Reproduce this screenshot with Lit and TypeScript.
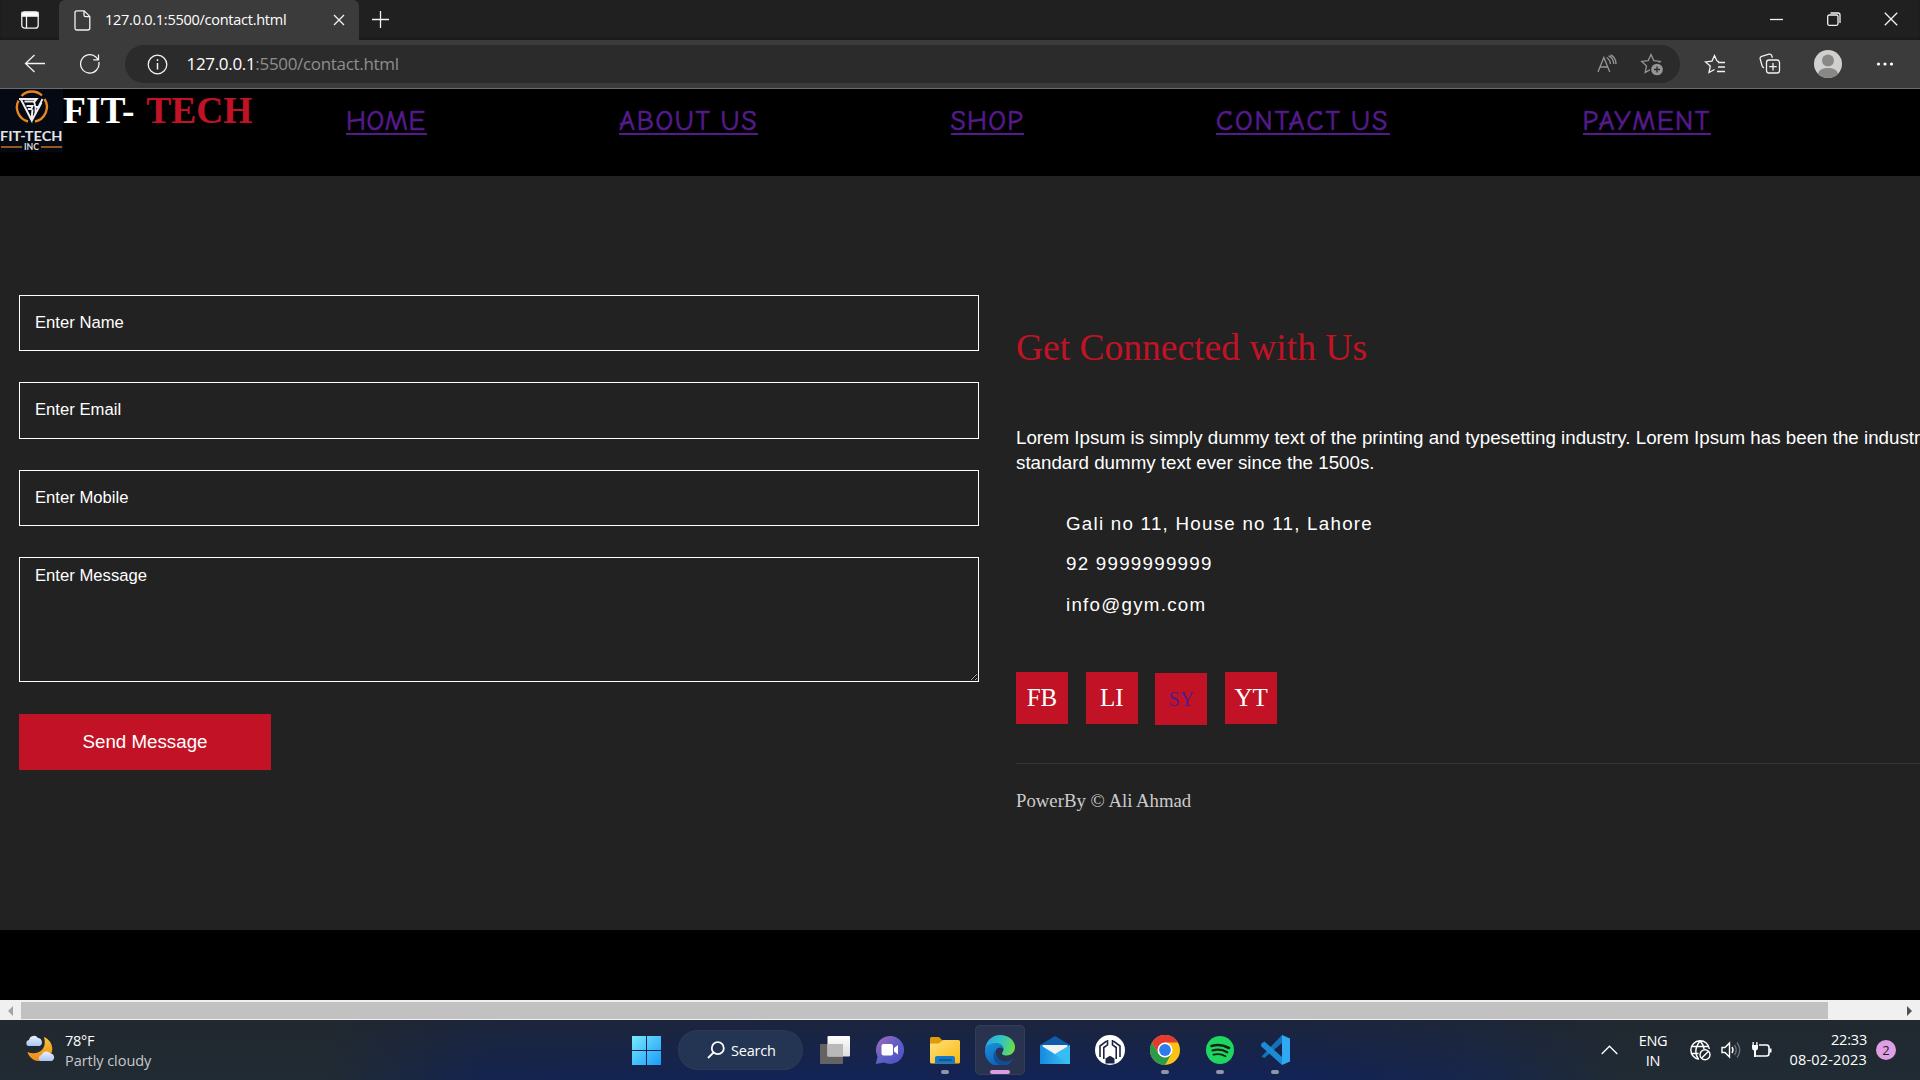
import { LitElement, html, css, svg } from "lit";
import { customElement } from "lit/decorators.js";

const star = "M12 2.6l2.8 6 6.5.8-4.8 4.5 1.3 6.5-5.8-3.2-5.8 3.2 1.3-6.5L2.700 9.4l6.500-.8z";

const navLinks = [
  { label: "HOME", cls: "w-home" },
  { label: "ABOUT US", cls: "w-about" },
  { label: "SHOP", cls: "w-shop" },
  { label: "CONTACT US", cls: "w-contact" },
  { label: "PAYMENT", cls: "w-pay" },
];

@customElement("browser-chrome")
class BrowserChrome extends LitElement {
  static styles = css`
    :host { display: block; font-family: "Segoe UI", "Open Sans", "Noto Sans", sans-serif; color: #fff; }
    svg { display: block; fill: none; stroke: #f2f2f2; stroke-width: 1.3; flex: none; }
    .tabs { height: 40px; background: #202020; display: flex; box-shadow: inset 0 -2px 2px #1a1a1a; }
    .workspace { width: 59px; padding: 11px 0 0 21px; box-sizing: border-box; }
    .tab { width: 300px; height: 40px; box-sizing: border-box; background: #3b3b3b; border-radius: 6px 6px 0 0; display: flex; align-items: center; padding: 0 14px 0 15px; }
    .title { font-size: 14.5px; letter-spacing: -0.26px; line-height: 20px; margin-left: 14px; flex: 1; white-space: nowrap; }
    .plus { margin: 10px 0 0 12px; }
    .winctl { margin-left: auto; display: flex; padding: 12px 22px 0 0; gap: 43.5px; }
    .bar { height: 48px; background: #3b3b3b; display: flex; align-items: center; box-sizing: border-box; padding-left: 24px; }
    .reload { margin-left: 34px; }
    .pill { margin-left: 25px; width: 1555px; height: 38px; border-radius: 19px; background: #2b2b2b; display: flex; align-items: center; box-sizing: border-box; padding: 0 17px 0 22px; }
    .url { font-size: 17px; letter-spacing: -0.32px; line-height: 24px; margin-left: 18.5px; flex: 1; white-space: nowrap; }
    .path { color: #8e8e8e; }
    .dim { stroke: #969696; }
    .fav { margin-left: 21px; }
    .s1 { margin-left: 23px; }
    .s2 { margin-left: 32px; }
    .s3 { margin-left: 33px; }
    .s4 { margin-left: 34px; }
    .line { height: 1px; background: #6b6b6b; }
  `;
  render() {
    return html`
      <div class="tabs">
        <div class="workspace">
          <svg width="18" height="18" viewBox="0 0 18 18"><rect x=".8" y=".8" width="16.400" height="16.400" rx="3"/><path d="M1 1.500h16v3.700H1z" fill="#fff"/><path d="M5.500 5v12"/></svg>
        </div>
        <div class="tab">
          <svg width="17" height="21" viewBox="0 0 17 21"><path d="M3 .8h7.200L15.800 6.400V18q0 2-2 2H3q-2 0-2-2V2.800q0-2 2-2zM10 1v4q0 1.600 1.600 1.600h4"/></svg>
          <span class="title">127.0.0.1:5500/contact.html</span>
          <svg width="12" height="12" viewBox="0 0 12 12"><path d="M1 1l10 10M11 1L1 11"/></svg>
        </div>
        <svg class="plus" width="19" height="19" viewBox="0 0 19 19"><path d="M9.500 1v17M1 9.500h17"/></svg>
        <div class="winctl">
          <svg width="13" height="14" viewBox="0 0 13 14"><path d="M0 7.500h13"/></svg>
          <svg width="14" height="14" viewBox="0 0 14 14"><rect x=".7" y="3" width="10.300" height="10.300" rx="1.500"/><path d="M3.500 1H11q2 0 2 2v8"/></svg>
          <svg width="14" height="14" viewBox="0 0 14 14"><path d="M.8.800l12.400 12.400M13.200.800L.8 13.200"/></svg>
        </div>
      </div>
      <div class="bar">
        <svg width="22" height="20" viewBox="0 0 22 20"><path d="M21 9.500H2M10.500 1L1.500 9.500l9 8.500"/></svg>
        <svg class="reload" width="20" height="20" viewBox="0 0 20 20"><path d="M18.800 8A9.200 9.200 0 1 1 15.800 2.900l2.400 2.700M18.500.5v5.300h-5.300"/></svg>
        <div class="pill">
          <svg width="21" height="21" viewBox="0 0 21 21"><circle cx="10.500" cy="10.500" r="9.300"/><path d="M10.500 9v6.500M10.500 5.300v1.700" stroke-width="1.500"/></svg>
          <span class="url">127.0.0.1<span class="path">:5500/contact.html</span></span>
          <svg class="dim" width="22" height="20" viewBox="0 0 22 20"><path d="M2 18L7.800 3.500 13.800 18M4 13h7.800M10.500 3.500q3.500 2 4 6.500M12.500 1.800q5 2 5.300 8.200M14.500.8q5.500 2.500 5.500 9.200"/></svg>
          <svg class="dim fav" width="24" height="24" viewBox="0 0 24 24"><path d=${star}/><circle cx="18" cy="17.500" r="6.500" fill="#969696" stroke="#2b2b2b"/><path d="M18 14.500v6M15 17.500h6" stroke="#2b2b2b"/></svg>
        </div>
        <svg class="s1" width="24" height="24" viewBox="0 0 24 24"><path d="M14 9.100L11.500 3.500 9 9.100l-6.500.8L7.300 14l-1.300 6.500 5.500-3M14 9.100l1.800.4M15 10.500h7M15 15h7M14 19.500h8"/></svg>
        <svg class="s2" width="22" height="22" viewBox="0 0 22 22"><path d="M5 14.800q-1.500-.5-2-2.300L1.200 6q-.5-2 1.500-2.600L10 1.200q2-.5 2.800 1.500l.6 2"/><rect x="7.500" y="7" width="13" height="13" rx="2.500"/><path d="M14 10v7.500M10.200 13.700h7.500"/></svg>
        <svg class="s3" width="28" height="28" viewBox="0 0 28 28" stroke="none"><circle cx="14" cy="14" r="14" fill="#d2d0ce" stroke="none"/><circle cx="14" cy="10.500" r="6" fill="#8a8886" stroke="none"/><path d="M4 23.500Q5.500 18 14 18t10 5.500Q20 28 14 28T4 23.500z" fill="#8a8886" stroke="none"/></svg>
        <svg class="s4" width="18" height="6" viewBox="0 0 18 6"><g fill="#fff" stroke="none"><circle cx="2.500" cy="3" r="1.600"/><circle cx="9" cy="3" r="1.600"/><circle cx="15.500" cy="3" r="1.600"/></g></svg>
      </div>
      <div class="line"></div>
    `;
  }
}

@customElement("contact-page")
class ContactPage extends LitElement {
  static styles = css`
    :host { display: block; height: 911px; background: #000; overflow: hidden; font-family: "Liberation Serif", serif; }
    header { height: 87px; display: flex; align-items: flex-start; }
    .logo { display: block; flex: none; }
    .brand { font-weight: 700; font-size: 37.500px; line-height: 44px; word-spacing: 3px; color: #fff; width: 283px; white-space: pre; }
    .brand span { color: #c11325; }
    nav { display: flex; gap: 192.500px; padding-top: 15px; }
    .link { color: #551a8b; font-family: "Comic Sans MS", "Comic Neue", Lato, sans-serif; font-size: 27.500px; line-height: 34px; height: 29px; border-bottom: 2px solid #551a8b; white-space: nowrap; text-decoration: none; box-sizing: content-box; -webkit-text-stroke: 0.700px #551a8b; }
    .w-home { width: 80.500px; letter-spacing: 0.700px; }
    .w-about { width: 139px; letter-spacing: 1.700px; word-spacing: -2px; }
    .w-shop { width: 73px; letter-spacing: 1.300px; }
    .w-contact { width: 174px; letter-spacing: 2px; word-spacing: -2px; }
    .w-pay { width: 128px; letter-spacing: 1.600px; }
    main { height: 754px; background: #222; display: flex; box-sizing: border-box; padding: 119px 0 0 19px; font-family: "Liberation Sans", Arial, sans-serif; color: #fff; }
    form { width: 960px; flex: none; display: flex; flex-direction: column; align-items: flex-start; }
    input, textarea { box-sizing: border-box; width: 960px; border: 1px solid #fff; border-radius: 0; background: transparent; color: #fff; font: 16.667px "Liberation Sans", Arial, sans-serif; outline: none; margin: 0 0 31px; }
    input { height: 56.400px; padding: 0 15px 2px; margin-bottom: 31.100px; }
    .lower { padding-bottom: 0; }
    textarea { height: 125px; padding: 8px 15px; margin-bottom: 32px; }
    ::placeholder { color: #fff; opacity: 1; }
    button { width: 252px; height: 56px; border: 0; background: #c11325; color: #fff; font: 18.750px "Liberation Sans", Arial, sans-serif; padding: 0 0 1px; }
    .info { margin-left: 37px; width: 960px; flex: none; }
    h2 { margin: 33px 0 57px; font: 400 37.500px/40px "Liberation Serif", serif; color: #c11325; }
    p { margin: 0; font-size: 18.750px; line-height: 25px; white-space: nowrap; }
    ul { list-style: none; margin: 28px 0 47px; padding: 0 0 0 50px; }
    li { height: 41px; line-height: 41px; font-size: 18.750px; letter-spacing: 1.250px; }
    li:first-child { height: 40px; }
    .social { display: flex; gap: 17.700px; height: 91px; font-family: "Liberation Serif", serif; }
    .social a { width: 52px; height: 52px; background: #c11325; text-align: center; font-size: 25px; line-height: 52px; color: #fff; }
    .social .visited { font-size: 20px; color: #551a8b; margin-top: 1px; }
    .foot { border-top: 1px solid #353535; padding-top: 26px; font: 18.750px/21px "Liberation Serif", serif; color: #ccc; }
  `;
  render() {
    return html`
      <header>
        <svg class="logo" width="63" height="63" viewBox="0 0 63 63">
          <rect width="63" height="63" fill="#040914"/>
          <path d="M21.500 7A14.500 14.500 0 0 1 42 6.500M44.500 10A14.800 14.800 0 0 1 35 32.500M28 32.500A14.800 14.800 0 0 1 18.500 11.500" fill="none" stroke="#e8851c" stroke-width="2.400"/>
          <path d="M19 10h17.500l-2 2.500H24.500" fill="none" stroke="#eee" stroke-width="2.200"/>
          <path d="M21 10.500L31.500 31l1-10.500M26.500 17h6l-1.200 3h-3.500M31.500 32L41.500 13.500" fill="none" stroke="#eee" stroke-width="2"/>
          <path d="M34 12.500l1.500 5.500h3L42.500 10M35.500 18v7" fill="none" stroke="#eee" stroke-width="1.800"/>
          <text x="0" y="52.200" textLength="62.500" lengthAdjust="spacingAndGlyphs" font-family="Lato, sans-serif" font-weight="700" font-size="14" fill="#e4e4e4">FIT-TECH</text>
          <path d="M1 58h21M41 58h21" stroke="#c8701d" stroke-width="1.300"/>
          <text x="24" y="61" textLength="15" lengthAdjust="spacingAndGlyphs" font-family="Lato, sans-serif" font-weight="700" font-size="8.500" fill="#ddd">INC</text>
        </svg>
        <div class="brand">FIT- <span>TECH</span></div>
        <nav>${navLinks.map((l) => html`<a class="link ${l.cls}">${l.label}</a>`)}</nav>
      </header>
      <main>
        <form>
          <input class="lower" placeholder="Enter Name">
          <input placeholder="Enter Email">
          <input class="lower" placeholder="Enter Mobile">
          <textarea placeholder="Enter Message"></textarea>
          <button type="button">Send Message</button>
        </form>
        <section class="info">
          <h2>Get Connected with Us</h2>
          <p>Lorem Ipsum is simply dummy text of the printing and typesetting industry. Lorem Ipsum has been the industry's<br>standard dummy text ever since the 1500s.</p>
          <ul><li>Gali no 11, House no 11, Lahore</li><li>92 9999999999</li><li>info@gym.com</li></ul>
          <div class="social"><a>FB</a><a>LI</a><a class="visited">SY</a><a>YT</a></div>
          <div class="foot">PowerBy © Ali Ahmad</div>
        </section>
      </main>
    `;
  }
}

const apps = [
  { run: "", icon: svg`<defs><linearGradient id="tv" x1="0" y1="0" x2="0" y2="1"><stop stop-color="#fff"/><stop offset="1" stop-color="#dcdcdc"/></linearGradient></defs><rect x="0" y="9" width="23" height="20" rx="1" fill="#636363"/><rect x="7.500" y="1" width="22.500" height="20.500" rx="1" fill="url(#tv)"/><path d="M7.500 9H23v12.500H7.500z" fill="#b9b9b9"/>` },
  { run: "", icon: svg`<defs><linearGradient id="ch" x1="0" y1="0" x2="1" y2="1"><stop stop-color="#a06ab4"/><stop offset=".55" stop-color="#5b5fc7"/><stop offset="1" stop-color="#4a4fc0"/></linearGradient></defs><path d="M15 1a14 14 0 1 1-6 26.600L.8 29l1.700-7.500A14 14 0 0 1 15 1z" fill="url(#ch)"/><rect x="6.500" y="9" width="11.500" height="11.500" rx="2" fill="#fff"/><path d="M19 13l4-3v9.500l-4-3z" fill="#fff"/>` },
  { run: "dot", icon: svg`<defs><linearGradient id="fo" x1="0" y1="0" x2="1" y2="1"><stop stop-color="#ffe07a"/><stop offset="1" stop-color="#fbb90f"/></linearGradient></defs><path d="M0 3.500Q0 2 1.500 2H9l3.500 3.500V12H0z" fill="#e19b08"/><path d="M0 8.500h9l4-3.500h15.500Q30 5 30 6.500V27q0 1.500-1.500 1.500h-27Q0 28.500 0 27z" fill="url(#fo)"/><path d="M5 28.500V23q0-2 2-2h16q2 0 2 2v5.500z" fill="#1479c9"/><path d="M9 25h13" stroke="#084f91" stroke-width="1.500"/>` },
  { run: "active", icon: svg`<defs><linearGradient id="e1" x1="0" y1=".3" x2="1" y2=".5"><stop stop-color="#2aa9e8"/><stop offset=".55" stop-color="#33c6bd"/><stop offset="1" stop-color="#6add48"/></linearGradient><linearGradient id="e2" x1="0" y1="0" x2=".6" y2="1"><stop stop-color="#1a93dd"/><stop offset="1" stop-color="#0c5cb0"/></linearGradient></defs><path d="M.2 14A15 15 0 0 1 15 0c8.500 0 15 5.500 15 12 0 5.500-4 8.500-8.500 8.500-3.500 0-4.500-1.200-4.500-2.200 0-1 1.500-1.500 1.500-4.300 0-3-3-5.500-7-5.500C6 8.500 1.500 11 .2 14z" fill="url(#e1)"/><path d="M0 15.500C0 10 5.500 8 10.500 8c5 0 8 2.800 8 6-1.500-1.500-3.500-2-5.500-1-4.500 2.500-2.500 12 5.500 13.500 4 .8 7-.5 9.500-2.500A15 15 0 0 1 0 15.500z" fill="url(#e2)"/><path d="M11.500 14.500c-3 4.500 0 11 7 12 4 .6 7-.5 9.500-2.500-3 4.500-8 6.500-13 6-7-2-8.500-11-3.500-15.500z" fill="#104d9b"/>` },
  { run: "", icon: svg`<defs><linearGradient id="ml" x1="0" y1="0" x2="1" y2="0"><stop stop-color="#1689dc"/><stop offset="1" stop-color="#3cc4f5"/></linearGradient></defs><path d="M0 10L15 1l15 9v6H0z" fill="#0f5da8"/><path d="M2.500 10h25v7L15 22 2.500 17z" fill="#f2f2f2"/><path d="M0 10l15 9L30 10v19H0z" fill="#37bdf2"/><path d="M0 10l30 19H0z" fill="url(#ml)"/>` },
  { run: "", icon: svg`<circle cx="15" cy="15" r="15" fill="#fff"/><path d="M5 22V11l6.500-4.800M8.800 24V12.500l3.700-2.700V5M25 22V11l-6.500-4.800M21.200 24V12.500l-3.700-2.700V5" fill="none" stroke="#1c2644" stroke-width="1.600"/><path d="M10.500 28.500V23.500l4.500-2.800 4.500 2.800v5z" fill="#1c2644"/>` },
  { run: "dot", icon: svg`<circle cx="15" cy="15" r="15" fill="#fbc116"/><path d="M2 7.500A15 15 0 0 1 28 7.500H15L8.500 18.700z" fill="#e33b2e"/><path d="M2 7.500A15 15 0 0 0 15 30l6.500-11.200L15 22.500 8.500 18.700z" fill="#2b9a4a"/><circle cx="15" cy="15" r="7.500" fill="#fff"/><circle cx="15" cy="15" r="5.900" fill="#2f7bed"/>` },
  { run: "dot", icon: svg`<circle cx="15" cy="15" r="14" fill="#1ed760"/><g fill="none" stroke="#142418" stroke-linecap="round"><path d="M6.500 11q9-2.800 17.500 2" stroke-width="2.600"/><path d="M7.500 15.500q8-2.200 14.800 1.800" stroke-width="2.200"/><path d="M8.500 19.700q6.500-1.700 12 1.500" stroke-width="1.800"/></g>` },
  { run: "dot", icon: svg`<path d="M1.500 21.500L22 0v8L4.500 23z" fill="#1273b8"/><path d="M1.500 8.500L4.500 6.500 22 22v8L.8 11z" fill="#1e8ad2"/><path d="M22 0l8 3.500v23L22 30z" fill="#30a9f2"/>` },
];

@customElement("task-bar")
class TaskBar extends LitElement {
  static styles = css`
    :host { display: flex; height: 60px; color: #fff; font-family: "Segoe UI", "Open Sans", "Noto Sans", sans-serif; background: linear-gradient(180deg, rgba(34,38,44,.6), rgba(34,38,44,0)), linear-gradient(90deg, #212b33 0, #212b33 320px, #14244e 480px, #122356 800px, #122356 1300px, #17264a 1480px, #202b34 1620px); }
    svg { display: block; flex: none; }
    .weather { width: 619px; display: flex; padding: 14px 0 0 25px; box-sizing: border-box; flex: none; }
    .wt { margin: -3px 0 0 9px; font-size: 14.500px; line-height: 20px; letter-spacing: -0.300px; }
    .wt .sub { color: #c6c9cc; letter-spacing: -0.050px; }
    .cell { width: 55px; height: 60px; flex: none; display: flex; justify-content: center; }
    .in { width: 50px; height: 50px; margin-top: 5px; border-radius: 5px; box-sizing: border-box; display: flex; flex-direction: column; align-items: center; padding-top: 10px; }
    .in.active { background: #29324f; box-shadow: inset 0 0 0 1px #343d58; }
    .in i { width: 8px; height: 4px; border-radius: 2px; margin-top: 5px; }
    .in.dot i { background: #9096a8; }
    .in.active i { background: #dc9de2; width: 20px; }
    .search { width: 125px; height: 40px; margin: 10px 4px 0 4px; border-radius: 20px; background: #243453; box-shadow: inset 0 0 0 1px #2a3957; box-sizing: border-box; display: flex; align-items: center; padding-left: 29px; font-size: 14.500px; letter-spacing: -0.200px; flex: none; }
    .search span { margin-left: 6px; }
    .tray { margin-left: auto; display: flex; align-items: center; padding-right: 24px; font-size: 14.500px; line-height: 20px; }
    .lang { text-align: center; width: 40px; margin: 1px 17px 0 15px; letter-spacing: -0.300px; }
    .clock { text-align: right; width: 86px; margin: 0 9px 0 9px; white-space: nowrap; letter-spacing: -0.200px; }
    .date { letter-spacing: 0.180px; }
    .badge { width: 20px; height: 20px; border-radius: 50%; background: #df9fe5; color: #1d1d1d; text-align: center; font-size: 13px; }
    .st { margin-right: 10px; }
  `;
  render() {
    return html`
      <div class="weather">
        <svg width="31" height="30" viewBox="0 0 31 30"><defs><linearGradient id="mo" x1="0" y1="0" x2="0" y2="1"><stop stop-color="#f4c63b"/><stop offset="1" stop-color="#f18616"/></linearGradient><linearGradient id="cl" x1="0" y1="0" x2="0" y2="1"><stop stop-color="#e8f1fb"/><stop offset="1" stop-color="#a9c7f2"/></linearGradient></defs><path d="M19 3c12 5 11 22-3 24-6 .8-12-3-13.500-9C11 22 23 17 19 3z" fill="url(#mo)"/><path d="M3 12a3.200 3.200 0 0 1 1-6 5 5 0 0 1 9-2 4.200 4.200 0 0 1 1.500 8z" fill="url(#cl)"/><path d="M15.500 27a3.200 3.200 0 0 1 1-6 5 5 0 0 1 8.800-1.500A4 4 0 0 1 27 27z" fill="url(#cl)"/></svg>
        <div class="wt"><div>78°F</div><div class="sub">Partly cloudy</div></div>
      </div>
      <div class="cell"><div class="in">
        <svg width="30" height="30" viewBox="0.5 0 30 30"><defs><linearGradient id="wi" gradientUnits="userSpaceOnUse" x1="0" y1="0" x2="30" y2="30"><stop stop-color="#7deafc"/><stop offset="1" stop-color="#169bfa"/></linearGradient></defs><path d="M.5 1h14v14h-14zM15.500 1h14v14h-14zM.5 16h14v14h-14zM15.500 16h14v14h-14z" fill="url(#wi)"/></svg>
      </div></div>
      <div class="search">
        <svg width="18" height="18" viewBox="0 0 18 18" fill="none" stroke="#fff" stroke-width="1.800"><circle cx="10.800" cy="7.200" r="6"/><path d="M6.500 11.500L1 17"/></svg>
        <span>Search</span>
      </div>
      ${apps.map((a) => html`<div class="cell"><div class="in ${a.run}"><svg width="30" height="30" viewBox="0 0 30 30">${a.icon}</svg><i></i></div></div>`)}
      <div class="tray">
        <svg width="17" height="10" viewBox="0 0 17 10" fill="none" stroke="#fff" stroke-width="1.300"><path d="M.7 9l7.800-7.800L16.300 9"/></svg>
        <div class="lang">ENG<br>IN</div>
        <svg class="st" width="21" height="21" viewBox="0 0 21 21" fill="none" stroke="#fff" stroke-width="1.400"><path d="M9 19.300A9.300 9.300 0 1 1 19.400 9M1.800 6.500h17M1.500 13.500h7M8.500 19.500Q2.500 10.500 10 1M10 1q3.800 4 4 8"/><circle cx="15" cy="14.800" r="5"/><path d="M11.800 18l6.400-6.400"/></svg>
        <svg class="st" width="20" height="18" viewBox="0 0 20 18" fill="none" stroke="#fff" stroke-width="1.400"><path d="M1 6.500h3L8.500 2v14L4 11.500H1z"/><path d="M11 6q2 3 0 6"/><path d="M13.500 4q3.500 5 0 10M16 1.500q5.500 7.500 0 15" stroke="#687078"/></svg>
        <svg width="21" height="18" viewBox="0 0 21 18"><path d="M1 4h6v3q0 2-2 2.500V16H3V9.500Q1 9 1 7zM1.500 1h1.300v3H1.500zM5.200 1h1.300v3H5.200z" fill="#fff"/><path d="M8 4h7.500Q18 4 18 6.500v6q0 2.500-2.500 2.500H4" fill="none" stroke="#fff" stroke-width="1.600"/><path d="M18.500 7.500h2v4h-2z" fill="#fff"/></svg>
        <div class="clock">22:33<div class="date">08-02-2023</div></div>
        <div class="badge">2</div>
      </div>
    `;
  }
}

@customElement("app-root")
class AppRoot extends LitElement {
  static styles = css`
    :host { display: block; width: 1920px; height: 1080px; overflow: hidden; background: #000; }
    .scroll { height: 20px; background: #f0f0f0; display: flex; align-items: center; box-sizing: border-box; padding: 1px 8px 0; }
    .thumb { width: 1807px; height: 17px; background: #c1c1c1; margin-left: 8px; }
    .l, .r { border: 5px solid transparent; border-left-width: 0; border-right: 5px solid #a3a3a3; }
    .r { border-right-width: 0; border-left: 5px solid #505050; margin-left: auto; }
  `;
  render() {
    return html`
      <browser-chrome></browser-chrome>
      <contact-page></contact-page>
      <div class="scroll"><div class="l"></div><div class="thumb"></div><div class="r"></div></div>
      <task-bar></task-bar>
    `;
  }
}
